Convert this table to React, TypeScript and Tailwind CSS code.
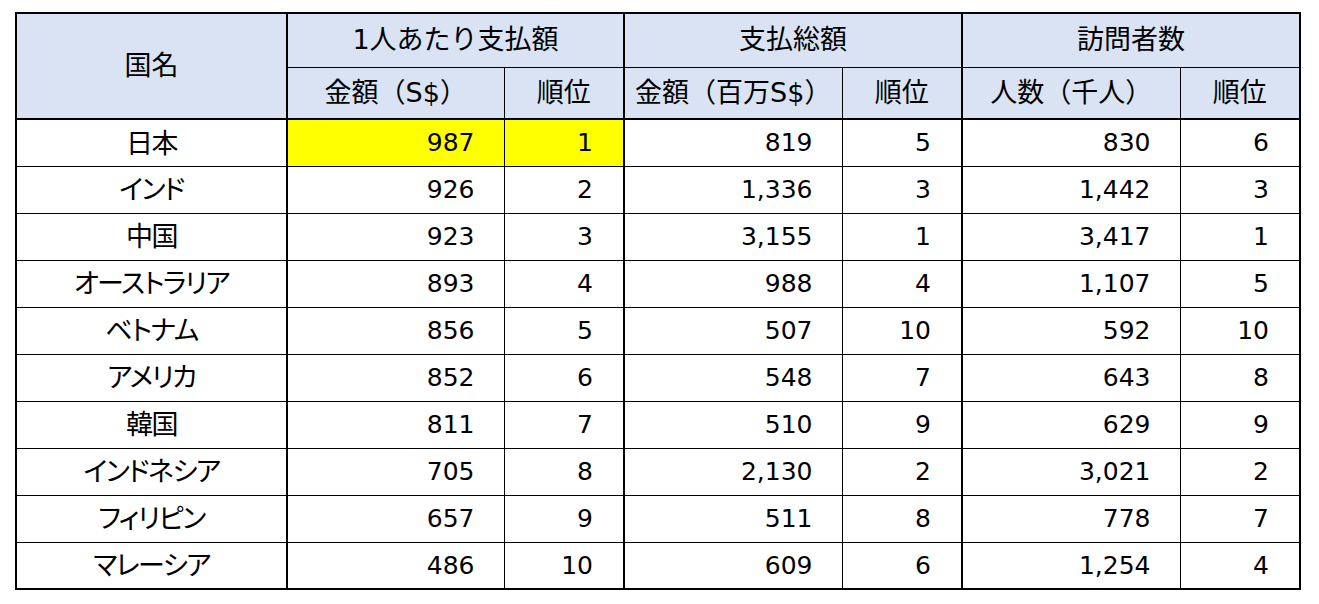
const rows: [string, string, string, string, string, string, string][] = [
  ["日本", "987", "1", "819", "5", "830", "6"],
  ["インド", "926", "2", "1,336", "3", "1,442", "3"],
  ["中国", "923", "3", "3,155", "1", "3,417", "1"],
  ["オーストラリア", "893", "4", "988", "4", "1,107", "5"],
  ["ベトナム", "856", "5", "507", "10", "592", "10"],
  ["アメリカ", "852", "6", "548", "7", "643", "8"],
  ["韓国", "811", "7", "510", "9", "629", "9"],
  ["インドネシア", "705", "8", "2,130", "2", "3,021", "2"],
  ["フィリピン", "657", "9", "511", "8", "778", "7"],
  ["マレーシア", "486", "10", "609", "6", "1,254", "4"],
];

const font = "font-['DejaVu_Sans','Noto_Sans_CJK_JP',sans-serif]";
const head = "bg-[#dae3f3] text-center font-normal text-[27px]";

export default function App() {
  return (
    <div className={`min-h-screen bg-white pl-[15px] pt-[12px] text-[25px] text-black ${font}`}>
      <table className="table-fixed border-collapse border-2 border-black">
        <colgroup>
          <col className="w-[271px]" />
          <col className="w-[217px]" />
          <col className="w-[120px]" />
          <col className="w-[218px]" />
          <col className="w-[120px]" />
          <col className="w-[218px]" />
          <col className="w-[120px]" />
        </colgroup>
        <thead>
          <tr className="h-[54px]">
            <th rowSpan={2} className={`${head} border-2 border-black`}>
              国名
            </th>
            <th colSpan={2} className={`${head} border-x-2 border-b border-black`}>
              1人あたり支払額
            </th>
            <th colSpan={2} className={`${head} border-x-2 border-b border-black`}>
              支払総額
            </th>
            <th colSpan={2} className={`${head} border-x-2 border-b border-black`}>
              訪問者数
            </th>
          </tr>
          <tr className="h-[52px]">
            <th className={`${head} border-b-2 border-l-2 border-r border-black`}>金額（S$）</th>
            <th className={`${head} border-b-2 border-r-2 border-black`}>順位</th>
            <th className={`${head} border-b-2 border-l-2 border-r border-black`}>金額（百万S$）</th>
            <th className={`${head} border-b-2 border-r-2 border-black`}>順位</th>
            <th className={`${head} border-b-2 border-l-2 border-r border-black`}>人数（千人）</th>
            <th className={`${head} border-b-2 border-r-2 border-black`}>順位</th>
          </tr>
        </thead>
        <tbody>
          {rows.map((r, i) => {
            const hl = i === 0 ? "bg-[#ffff00]" : "";
            return (
              <tr key={r[0]} className="h-[47px]">
                <td className="border-b border-r-2 border-black pt-[2px] text-center text-[27px] tracking-[-1.5px] [font-feature-settings:'palt']">
                  {r[0]}
                </td>
                <td className={`border-b border-r border-black pr-[29px] text-right ${hl}`}>{r[1]}</td>
                <td className={`border-b border-r-2 border-black pr-[30px] text-right ${hl}`}>{r[2]}</td>
                <td className="border-b border-r border-black pr-[29px] text-right">{r[3]}</td>
                <td className="border-b border-r-2 border-black pr-[30px] text-right">{r[4]}</td>
                <td className="border-b border-r border-black pr-[29px] text-right">{r[5]}</td>
                <td className="border-b border-black pr-[30px] text-right">{r[6]}</td>
              </tr>
            );
          })}
        </tbody>
      </table>
    </div>
  );
}
